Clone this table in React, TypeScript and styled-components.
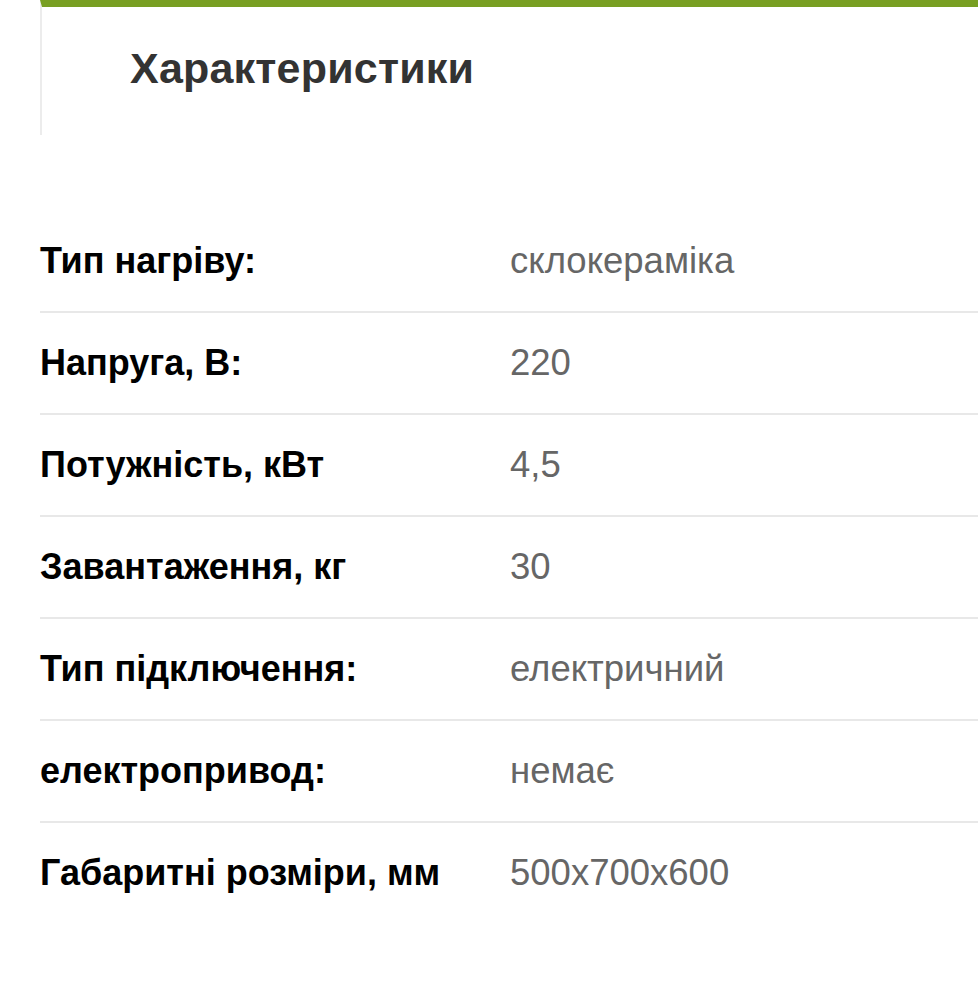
import React from "react";
import styled, { createGlobalStyle } from "styled-components";

const Global = createGlobalStyle`
  html, body { margin: 0; padding: 0; background: #fff; }
  body { font-family: "Liberation Sans", Arial, sans-serif; }
`;

const Page = styled.div`
  padding-left: 40px;
  width: 938px;
`;

const HeaderCard = styled.div`
  border-top: 7px solid #789f22;
  border-left: 2px solid #ececec;
  height: 135px;
  display: flex;
  align-items: center;
  padding-left: 88px;
  padding-bottom: 6px;
  box-sizing: border-box;
`;

const Title = styled.h2`
  margin: 0;
  font-size: 43px;
  font-weight: 700;
  color: #333;
  letter-spacing: 0.2px;
`;

const Table = styled.div`
  margin-top: 76px;
  display: flex;
  flex-direction: column;
`;

const Row = styled.div<{ $last?: boolean }>`
  display: grid;
  grid-template-columns: 470px 1fr;
  align-items: center;
  height: 100px;
  border-bottom: 2px solid ${(p) => (p.$last ? "transparent" : "#e8e8e8")};
`;

const Label = styled.div`
  font-size: 36px;
  font-weight: 700;
  color: #000;
`;

const Value = styled.div`
  font-size: 36.5px;
  color: #666;
`;

const rows: [string, string][] = [
  ["Тип нагріву:", "склокераміка"],
  ["Напруга, В:", "220"],
  ["Потужність, кВт", "4,5"],
  ["Завантаження, кг", "30"],
  ["Тип підключення:", "електричний"],
  ["електропривод:", "немає"],
  ["Габаритні розміри, мм", "500х700х600"],
];

export default function App() {
  return (
    <Page>
      <Global />
      <HeaderCard>
        <Title>Характеристики</Title>
      </HeaderCard>
      <Table>
        {rows.map(([l, v], i) => (
          <Row key={i} $last={i === rows.length - 1}>
            <Label>{l}</Label>
            <Value>{v}</Value>
          </Row>
        ))}
      </Table>
    </Page>
  );
}
